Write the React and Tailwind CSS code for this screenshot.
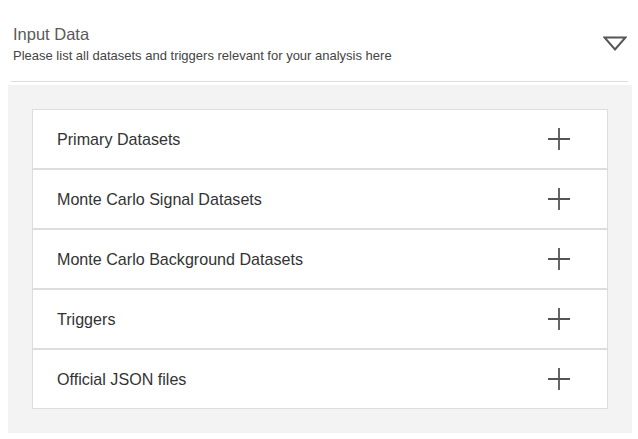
import React from "react";

const sections = [
  "Primary Datasets",
  "Monte Carlo Signal Datasets",
  "Monte Carlo Background Datasets",
  "Triggers",
  "Official JSON files",
];

function PlusIcon() {
  return (
    <svg width="24" height="24" viewBox="0 0 24 24" className="text-[#555]">
      <path d="M12 1v22M1 12h22" stroke="currentColor" strokeWidth="1.8" fill="none" />
    </svg>
  );
}

function TriangleIcon() {
  return (
    <svg width="24" height="16" viewBox="0 0 24 16" className="text-[#555]">
      <path d="M1.5 1.5h21L12 13.5z" stroke="currentColor" strokeWidth="2" fill="none" strokeLinejoin="miter" />
    </svg>
  );
}

export default function App() {
  return (
    <div className="min-h-screen bg-white font-['Liberation_Sans',Arial,sans-serif]">
      {/* Header */}
      <div className="mx-[11px] w-[617px] flex items-center justify-between border-b border-[#dddddd] pt-[23px] pb-[17px]">
        <div className="pl-[2px]">
          <h2 className="text-[16.5px] leading-[22px] text-[#5a5a5a]">Input Data</h2>
          <p className="mt-[2px] text-[13px] leading-[17px] text-[#444]">
            Please list all datasets and triggers relevant for your analysis here
          </p>
        </div>
        <button className="mr-[1px]">
          <TriangleIcon />
        </button>
      </div>

      {/* Panel */}
      <div className="mx-2 mt-[3px] w-[624px] bg-[#f3f3f3] p-6">
        <div className="flex flex-col">
          {sections.map((label) => (
            <div
              key={label}
              className="flex h-[60px] items-center justify-between border border-[#dddddd] bg-white pl-6 pr-[36px]"
            >
              <span className="text-[16.1px] text-[#333]">{label}</span>
              <PlusIcon />
            </div>
          ))}
        </div>
      </div>
    </div>
  );
}
